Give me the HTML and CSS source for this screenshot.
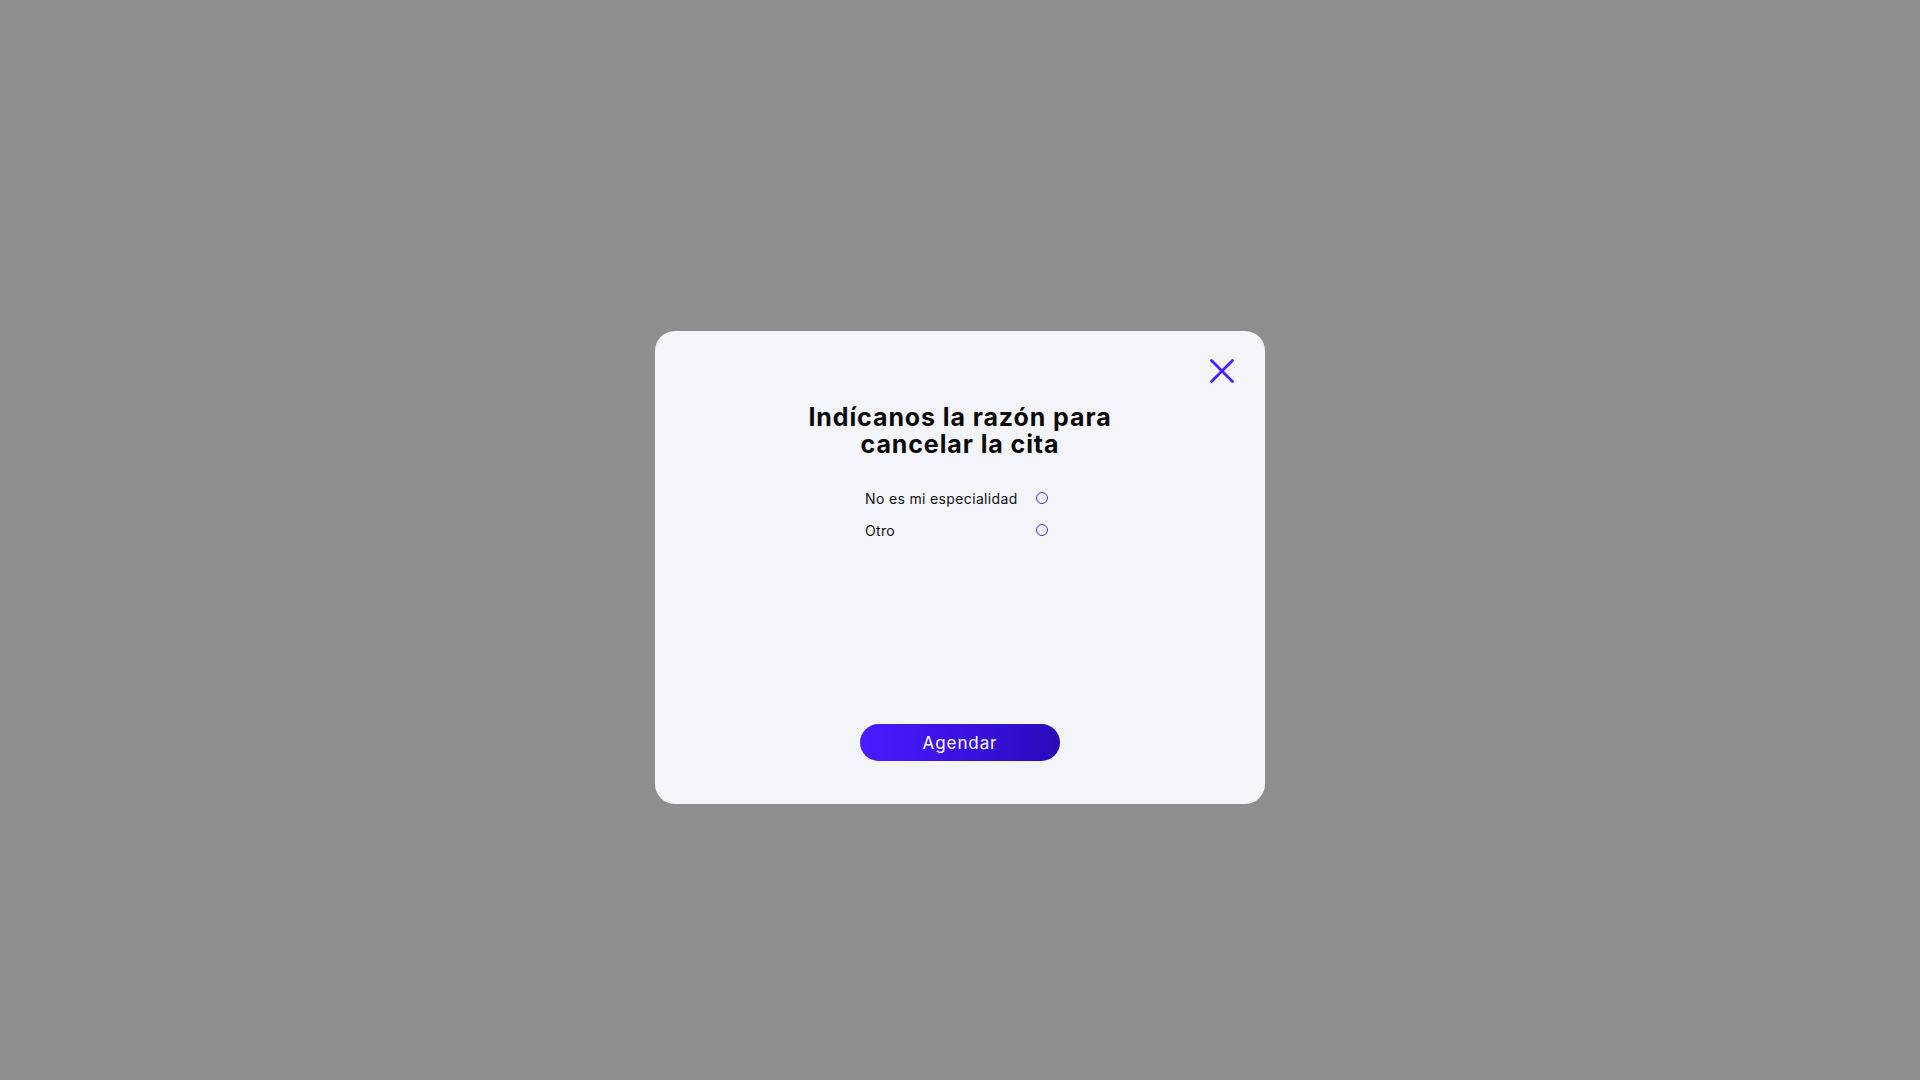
FILE: index.html
```html
<!DOCTYPE html>
<html lang="es">
<head>
<meta charset="utf-8">
<title>Cancelar cita</title>
<link rel="stylesheet" href="styles.css">
</head>
<body>
<div class="overlay">
  <div class="modal">
    <button class="close" aria-label="Cerrar">
      <svg width="24" height="24" viewBox="0 0 24 24"><path d="M1.5 1.5 L22.5 22.5 M22.5 1.5 L1.5 22.5" stroke="#4a1fff" stroke-width="2.8" stroke-linecap="round" fill="none"/></svg>
    </button>
    <h1 class="title">Indícanos la razón para<br>cancelar la cita</h1>
    <div class="options">
      <label class="option"><span>No es mi especialidad</span><span class="radio"></span></label>
      <label class="option"><span>Otro</span><span class="radio"></span></label>
    </div>
    <button class="submit">Agendar</button>
  </div>
</div>
</body>
</html>
```
FILE: styles.css
```css
html, body {
  margin: 0;
  padding: 0;
  height: 100%;
}
body {
  font-family: Inter, "Noto Sans", sans-serif;
  background: #8e8e8e;
}
.overlay {
  height: 100%;
  display: flex;
  align-items: center;
  justify-content: center;
}
.modal {
  position: relative;
  box-sizing: border-box;
  width: 610px;
  height: 473px;
  margin-top: 55px;
  background: #f4f5fa;
  border-radius: 20px;
  display: flex;
  flex-direction: column;
  align-items: center;
  padding-top: 73px;
}
.close {
  position: absolute;
  top: 28px;
  right: 31px;
  width: 24px;
  height: 24px;
  padding: 0;
  border: 0;
  background: none;
  cursor: pointer;
}
.close svg { display: block; }
.title {
  margin: 0;
  font-size: 25px;
  line-height: 27px;
  font-weight: 700;
  color: #0a0a0a;
  text-align: center;
  letter-spacing: 0.9px;
}
.options {
  margin-top: 30px;
  width: 183px;
  margin-left: -7px;
  display: flex;
  flex-direction: column;
  gap: 12px;
}
.option {
  display: flex;
  justify-content: space-between;
  align-items: center;
  height: 20px;
  font-size: 14px;
  color: #111;
  letter-spacing: 0.35px;
}
.radio {
  width: 10px;
  height: 10px;
  border: 1.5px solid #4a2cff;
  border-radius: 50%;
}
.submit {
  margin-top: auto;
  margin-bottom: 43px;
  width: 200px;
  height: 37px;
  border: 0;
  border-radius: 19px;
  background: linear-gradient(90deg, #4a1cff 0%, #3b12e6 45%, #2a0bb8 100%);
  color: #fff;
  font-family: Inter, "Noto Sans", sans-serif;
  font-size: 17px;
  letter-spacing: 0.9px;
  cursor: pointer;
}
```
